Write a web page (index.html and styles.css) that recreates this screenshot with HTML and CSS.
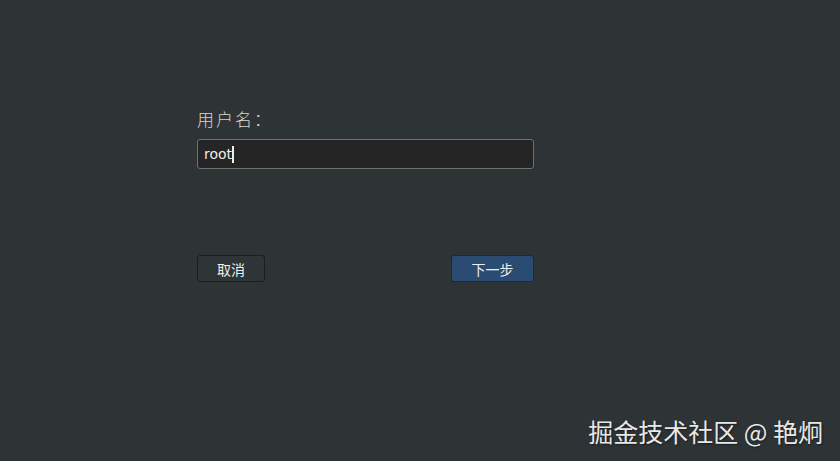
FILE: index.html
```html
<!DOCTYPE html>
<html lang="zh-CN">

<head>
  <meta charset="UTF-8" />
  <meta name="viewport" content="width=device-width, initial-scale=1.0" />
  <title>登录</title>
  <link rel="stylesheet" href="styles.css">
</head>

<body>
  <div class="login">
    <label class="field-label" for="username">用户名：</label>
    <div class="entry">
      <span class="entry-text">root</span><span class="caret"></span>
    </div>
    <div class="actions">
      <button class="btn">取消</button>
      <button class="btn btn-primary">下一步</button>
    </div>
  </div>
  <div class="watermark">掘金技术社区 @ 艳炯</div>
</body>

</html>
```

FILE: styles.css
```css
body {
  margin: 0;
  width: 840px;
  height: 461px;
  background: #2e3436;
  font-family: 'Noto Sans', 'Noto Sans CJK SC', sans-serif;
  color: #eeeeec;
  display: flex;
  flex-direction: column;
  overflow: hidden;
}

.login {
  width: 337px;
  margin-left: 197px;
  padding-top: 107px;
  display: flex;
  flex-direction: column;
}

.field-label {
  font-family: 'Noto Sans CJK SC', sans-serif;
  font-weight: 300;
  font-size: 17px;
  line-height: 23px;
  color: #d3d7cf;
  letter-spacing: 2px;
  margin-bottom: 9px;
}

.entry {
  box-sizing: border-box;
  height: 30px;
  border: 1px solid #6f716c;
  border-radius: 3px;
  background: #252525;
  display: flex;
  align-items: center;
  padding-left: 6px;
}

.entry-text {
  font-family: 'DejaVu Sans', sans-serif;
  font-size: 14px;
  color: #eeeeec;
}

.caret {
  width: 2px;
  height: 17px;
  background: #eeeeec;
}

.actions {
  display: flex;
  justify-content: space-between;
  margin-top: 86px;
}

.btn {
  width: 68px;
  height: 27px;
  box-sizing: border-box;
  border: 1px solid #1b1d1e;
  border-radius: 3px;
  background: #2f3537;
  color: #eeeeec;
  font-family: 'Noto Sans CJK SC', sans-serif;
  font-size: 14px;
  padding: 0;
}

.btn-primary {
  width: 83px;
  background: #2a4c72;
  border-color: #182a3c;
}

.watermark {
  margin-top: auto;
  align-self: flex-end;
  margin-right: 17px;
  margin-bottom: 12px;
  font-family: 'Noto Sans CJK SC', sans-serif;
  font-size: 25px;
  line-height: 36px;
  color: #e8e8e8;
  text-shadow: 1px 1px 2px rgba(0, 0, 0, 0.5);
}
```
